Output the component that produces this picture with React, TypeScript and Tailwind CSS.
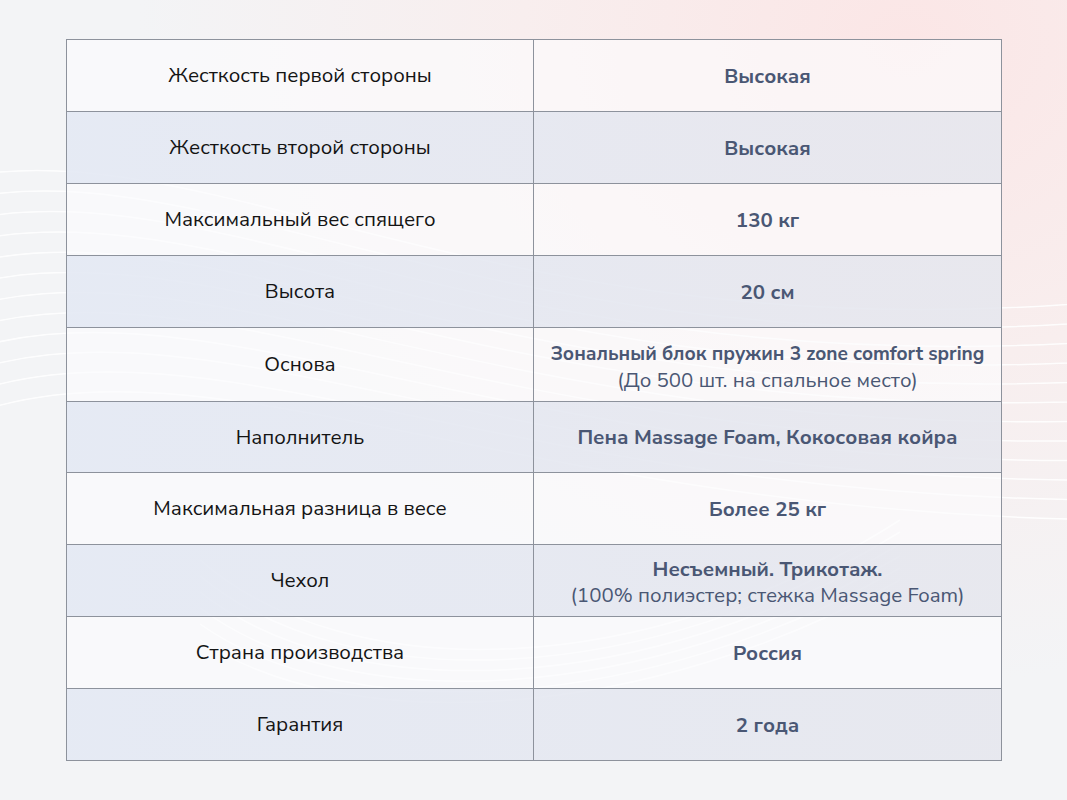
import React from 'react';

type Row = { label: string; value: string; note?: string; h: string; valueSize?: string; shift?: string };

const rows: Row[] = [
    { label: 'Жесткость первой стороны', value: 'Высокая', h: 'h-[72px]' },
    { label: 'Жесткость второй стороны', value: 'Высокая', h: 'h-[72px]' },
    { label: 'Максимальный вес спящего', value: '130 кг', h: 'h-[72px]' },
    { label: 'Высота', value: '20 см', h: 'h-[72px]' },
    {
        label: 'Основа',
        value: 'Зональный блок пружин 3 zone comfort spring',
        note: '(До 500 шт. на спальное место)',
        h: 'h-[74px]',
        valueSize: 'text-[19.2px]',
        shift: 'pt-[4px]',
    },
    { label: 'Наполнитель', value: 'Пена Massage Foam, Кокосовая койра', h: 'h-[71px]' },
    { label: 'Максимальная разница в весе', value: 'Более 25 кг', h: 'h-[72px]' },
    { label: 'Чехол', value: 'Несъемный. Трикотаж.', note: '(100% полиэстер; стежка Massage Foam)', h: 'h-[72px]', shift: 'pt-[2px]' },
    { label: 'Страна производства', value: 'Россия', h: 'h-[72px]' },
    { label: 'Гарантия', value: '2 года', h: 'h-[72px]' },
];

// faint wave lines behind the table
const Waves: React.FC = () => (
    <svg className="absolute inset-0 h-full w-full" viewBox="0 0 1067 800" preserveAspectRatio="none">
        <g fill="none" stroke="#ffffff" strokeWidth="1.5" opacity="0.9">
            {[0, 1, 2, 3, 4, 5, 6, 7, 8, 9, 10, 11].map((i) => (
                <path key={i} d={`M -50 ${180 + i * 22} C 200 ${120 + i * 18}, 500 ${360 + i * 14}, 1120 ${300 + i * 20}`} />
            ))}
            {[0, 1, 2, 3, 4, 5].map((i) => (
                <path key={`b${i}`} d={`M 200 ${560 + i * 16} C 350 ${690 + i * 10}, 650 ${680 + i * 8}, 900 ${520 + i * 12}`} />
            ))}
        </g>
    </svg>
);

const App: React.FC = () => {
    return (
        <div className="relative w-[1067px] h-[800px] overflow-hidden bg-[#f3f4f6] font-['Nunito_Sans','Open_Sans','Noto_Sans',sans-serif]">
            <div className="absolute inset-0 bg-[radial-gradient(ellipse_at_85%_5%,#fbe6e6_0%,#f8eeee_30%,rgba(243,244,246,0)_60%)]" />
            <Waves />
            <div className="relative flex flex-col pt-[39px] pl-[66px]">
                <div className="flex flex-col w-[936px] border-t border-l border-[#8d929c]">
                    {rows.map((row, i) => (
                        <div
                            key={row.label}
                            className={`grid grid-cols-[467px_468px] box-border ${row.h} border-b border-[#8d929c] ${
                                i % 2 === 1
                                    ? 'bg-[linear-gradient(90deg,rgba(228,233,244,0.9),rgba(230,231,238,0.9))]'
                                    : 'bg-[rgba(252,252,253,0.65)]'
                            }`}
                        >
                            <div className="flex items-center justify-center border-r border-[#8d929c] text-[20.5px] text-[#141414]">
                                {row.label}
                            </div>
                            <div
                                className={`flex flex-col items-center justify-center border-r border-[#8d929c] text-center text-[20.5px] leading-[26px] text-[#4a5774] ${row.shift ?? ''}`}
                            >
                                <span className={`font-bold ${row.valueSize ?? ''}`}>{row.value}</span>
                                {row.note && <span className="font-normal">{row.note}</span>}
                            </div>
                        </div>
                    ))}
                </div>
            </div>
        </div>
    );
};

export default App;
